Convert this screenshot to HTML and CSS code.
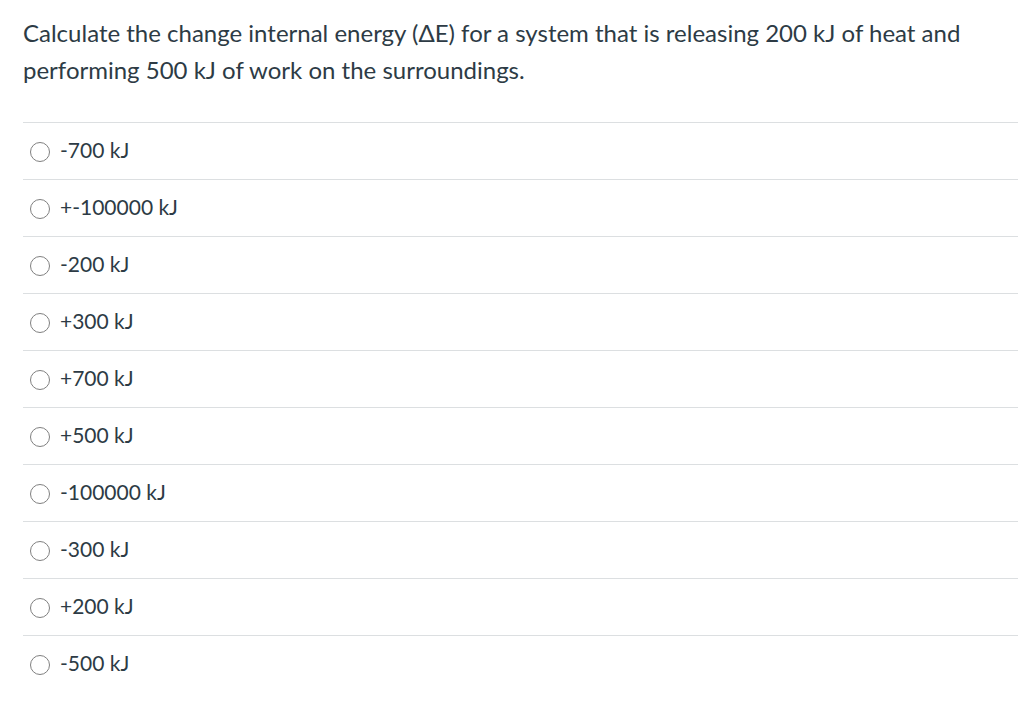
FILE: index.html
```html
<!DOCTYPE html>
<html>
<head>
<meta charset="utf-8">
<link rel="stylesheet" href="styles.css">
</head>
<body>
<div class="quiz">
  <p class="question">Calculate the change internal energy (ΔE) for a system that is releasing 200 kJ of heat and performing 500 kJ of work on the surroundings.</p>
  <div class="answers">
    <label class="answer"><span class="radio"></span><span class="text">-700 kJ</span></label>
    <label class="answer"><span class="radio"></span><span class="text">+-100000 kJ</span></label>
    <label class="answer"><span class="radio"></span><span class="text">-200 kJ</span></label>
    <label class="answer"><span class="radio"></span><span class="text">+300 kJ</span></label>
    <label class="answer"><span class="radio"></span><span class="text">+700 kJ</span></label>
    <label class="answer"><span class="radio"></span><span class="text">+500 kJ</span></label>
    <label class="answer"><span class="radio"></span><span class="text">-100000 kJ</span></label>
    <label class="answer"><span class="radio"></span><span class="text">-300 kJ</span></label>
    <label class="answer"><span class="radio"></span><span class="text">+200 kJ</span></label>
    <label class="answer"><span class="radio"></span><span class="text">-500 kJ</span></label>
  </div>
</div>
</body>
</html>
```
FILE: styles.css
```css
html, body {
  margin: 0;
  padding: 0;
  background: #fff;
}
body {
  font-family: Lato, "Liberation Sans", sans-serif;
  color: #2d3b45;
}
.quiz {
  padding: 14px 0 0 23px;
}
.question {
  margin: 0;
  font-size: 24px;
  line-height: 37px;
  padding-right: 40px;
}
.answers {
  margin-top: 34px;
}
.answer {
  display: flex;
  align-items: center;
  height: 56px;
  border-top: 1px solid #dcdfe1;
  font-size: 21px;
}
.radio {
  box-sizing: border-box;
  width: 20px;
  height: 20px;
  border: 1.5px solid #808080;
  border-radius: 50%;
  margin-left: 7px;
  margin-right: 10px;
  margin-top: 2px;
}
.text {
  margin-bottom: 4px;
}
```
